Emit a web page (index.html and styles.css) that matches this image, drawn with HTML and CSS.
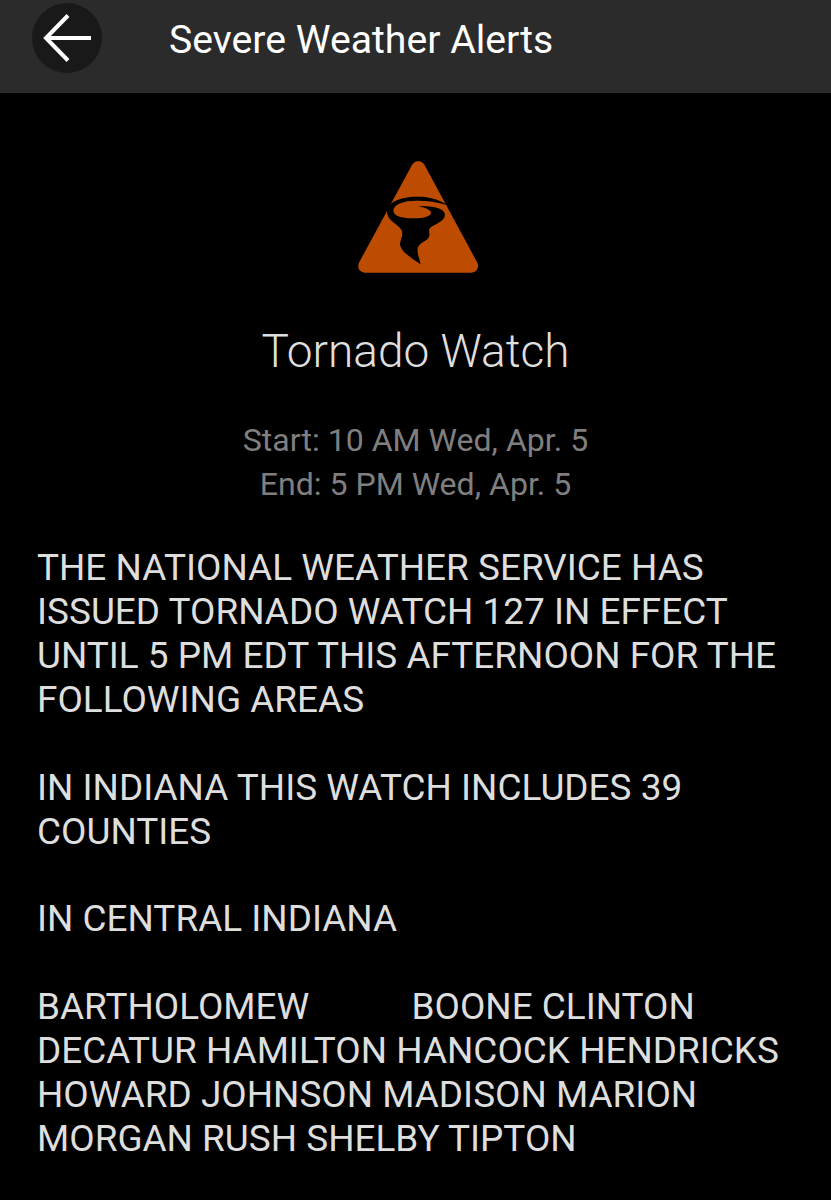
FILE: index.html
```html
<!DOCTYPE html>
<html lang="en">
<head>
    <meta charset="UTF-8">
    <meta name="viewport" content="width=device-width, initial-scale=1.0">
    <title>Severe Weather Alerts</title>
    <link rel="stylesheet" href="styles.css">
</head>
<body>
    <header class="top-bar">
        <button class="back-button" aria-label="Back">
            <svg width="50" height="48" viewBox="0 0 50 48">
                <path d="M26 1.5 L4 24 L26 46.5 M4 24 H49"/>
            </svg>
        </button>
        <h1>Severe Weather Alerts</h1>
    </header>
    <main>
        <svg class="alert-icon" width="122" height="114" viewBox="0 0 122 114">
            <path class="triangle" d="M55.5 4 Q61.3 -2 67 4 L120.5 103 Q123 110.5 115 112.7 H7.5 Q-0.5 111 1.8 103 Z"/>
            <path class="tornado" d="M90 45 C80 38 69 36.5 59.5 36.7 C42 37 30 43 30 51.5 C30 61 40 63 44.5 70 C47 76 43 79 43 85 C45 93 55 98 63.7 104.5 C62.5 98 59.5 93 60.8 87.5 C63 82 71 81 72.3 76 C73 73 71 70 73 68 C77 64 88 62 88 54.5 C87 47 73 46 61 46 C68 47.5 75 50 74 53.5 C72 57.5 64 58.6 54.7 58.3 C45 58.3 36.3 56 36.3 50.5 C37 44 47 40.7 59 40.7 C69 40.5 80 42 90 45 Z"/>
        </svg>
        <h2>Tornado Watch</h2>
        <div class="alert-times">
            <p>Start: 10 AM Wed, Apr. 5</p>
            <p>End: 5 PM Wed, Apr. 5</p>
        </div>
        <div class="alert-text">
            <p>THE NATIONAL WEATHER SERVICE HAS<br>ISSUED TORNADO WATCH 127 IN EFFECT<br>UNTIL 5 PM EDT THIS AFTERNOON FOR THE<br>FOLLOWING AREAS</p>
            <p>IN INDIANA THIS WATCH INCLUDES 39<br>COUNTIES</p>
            <p>IN CENTRAL INDIANA</p>
            <p><span class="county-column">BARTHOLOMEW</span>BOONE CLINTON<br>DECATUR HAMILTON HANCOCK HENDRICKS<br>HOWARD JOHNSON MADISON MARION<br>MORGAN RUSH SHELBY TIPTON</p>
        </div>
    </main>
</body>
</html>
```
FILE: styles.css
```css
body {
    margin: 0;
    min-height: 1200px;
    background: #000;
    color: #dedede;
    font-family: Roboto, sans-serif;
}

.top-bar {
    display: flex;
    align-items: flex-start;
    height: 93px;
    background: #2b2b2b;
}

.back-button {
    display: flex;
    align-items: center;
    justify-content: center;
    width: 70px;
    height: 70px;
    margin: 3px 0 0 32px;
    padding: 0;
    border: none;
    border-radius: 50%;
    background: #191919;
}

.back-button path {
    fill: none;
    stroke: #fff;
    stroke-width: 4;
}

.top-bar h1 {
    margin: 17px 0 0 67px;
    color: #fff;
    font-size: 39.2px;
    font-weight: 400;
    line-height: 46px;
    white-space: nowrap;
}

main {
    padding: 67px 37px 0;
}

.alert-icon {
    display: block;
    margin: 0 auto;
    padding-left: 4px;
}

.triangle {
    fill: #bd4b00;
}

.tornado {
    fill: #000;
}

main h2 {
    margin: 49px 0 0;
    font-size: 46px;
    font-weight: 300;
    line-height: 56px;
    text-align: center;
}

.alert-times {
    margin-top: 39px;
    color: #7f7f7f;
    font-size: 32.1px;
    line-height: 44px;
    text-align: center;
}

.alert-times p {
    margin: 0;
}

.alert-text {
    margin-top: 40px;
    font-size: 36.93px;
    line-height: 43.93px;
    white-space: nowrap;
}

.alert-text p {
    margin: 0 0 43.93px;
}

.county-column {
    display: inline-block;
    width: 374.5px;
}
```
